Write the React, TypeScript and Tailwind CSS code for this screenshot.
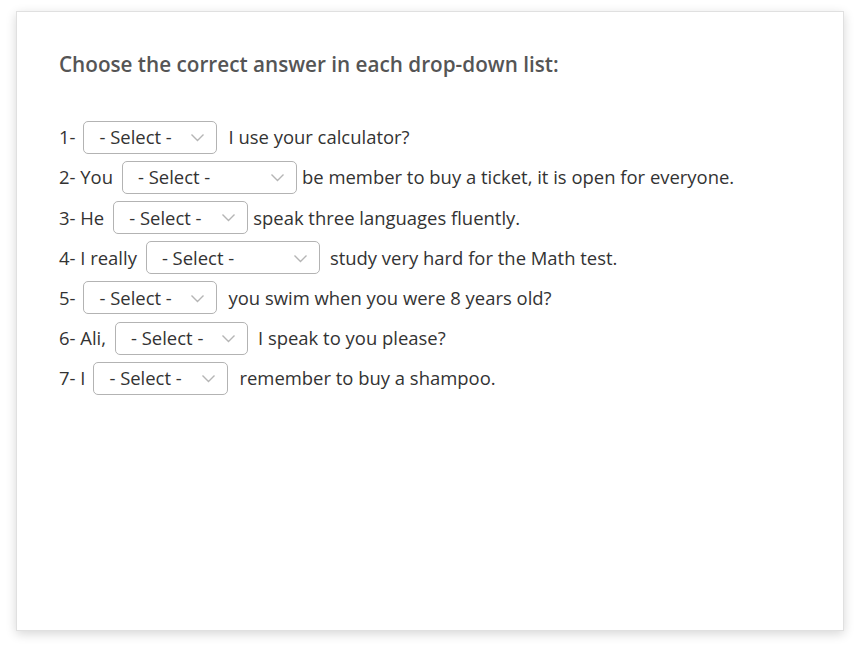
import React from "react";

function Sel({ w }: { w: number }) {
  return (
    <span
      className="inline-flex h-[33px] items-center justify-between rounded-[5px] border border-[#b3b3b3] bg-white pl-[15px] pr-[11px] text-[#333]"
      style={{ width: w }}
    >
      <span>- Select -</span>
      <svg width="15" height="14" viewBox="0 0 15 14" fill="none">
        <path d="M1.5 4.5l6 6 6-6" stroke="#b5b5b5" strokeWidth="1.4" />
      </svg>
    </span>
  );
}

const rows: { pre: string; w: number; post: string; ml: number; mr: number }[] = [
  { pre: "1-", w: 134, post: "I use your calculator?", ml: 8, mr: 11 },
  { pre: "2- You", w: 175, post: "be member to buy a ticket, it is open for everyone.", ml: 9, mr: 5 },
  { pre: "3- He", w: 135, post: "speak three languages fluently.", ml: 9, mr: 5 },
  { pre: "4- I really", w: 174, post: "study very hard for the Math test.", ml: 9, mr: 10 },
  { pre: "5-", w: 134, post: "you swim when you were 8 years old?", ml: 8, mr: 11 },
  { pre: "6- Ali,", w: 133, post: "I speak to you please?", ml: 9, mr: 10 },
  { pre: "7- I", w: 135, post: "remember to buy a shampoo.", ml: 8, mr: 11 },
];

export default function App() {
  return (
    <div className="min-h-[653px] w-[861px] bg-white pt-[11px] pl-[16px]" style={{ fontFamily: "'Open Sans', sans-serif" }}>
      <div className="h-[620px] w-[828px] border border-[#e0e0e0] bg-white pl-[42px] pt-[38px] shadow-[0_3px_10px_rgba(0,0,0,0.16)]">
        <div className="text-[20.7px] font-semibold leading-[28px] text-[#555]">
          Choose the correct answer in each drop-down list:
        </div>
        <div className="mt-[39px] flex flex-col text-[18.45px] text-[#333]">
          {rows.map((r, i) => (
            <div key={i} className="flex h-[40.2px] items-center whitespace-pre">
              <span>{r.pre}</span>
              <span style={{ marginLeft: r.ml, marginRight: r.mr }} className="inline-flex">
                <Sel w={r.w} />
              </span>
              <span>{r.post}</span>
            </div>
          ))}
        </div>
      </div>
    </div>
  );
}
